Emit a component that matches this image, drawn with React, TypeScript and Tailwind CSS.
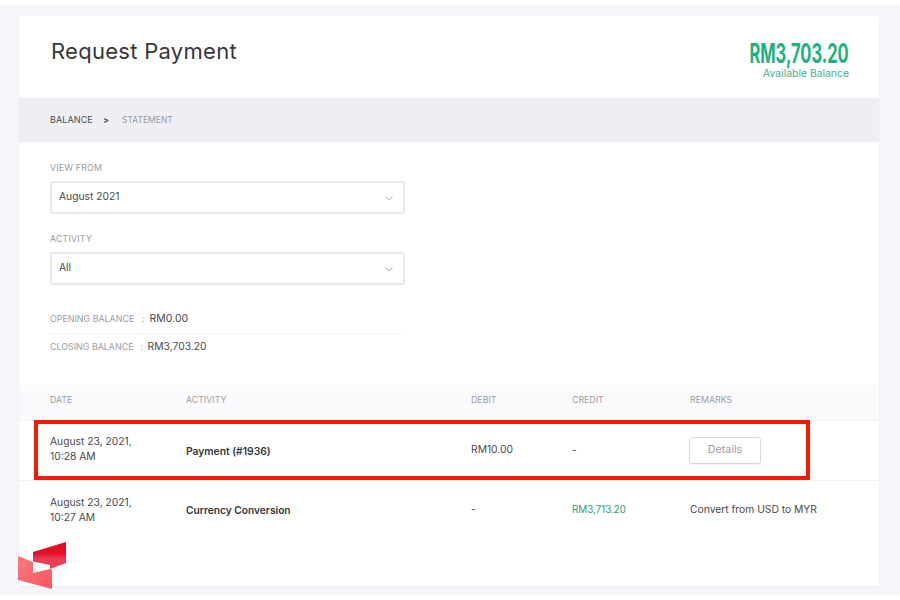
const font = "font-['Inter','Liberation_Sans',sans-serif]";

function Chevron() {
  return (
    <svg width="8" height="5" viewBox="0 0 8 5" fill="none" className="mt-[3px]">
      <path d="M0.5 0.5 L4 4 L7.5 0.5" stroke="#b4b6bb" strokeWidth="1" />
    </svg>
  );
}

function SelectField({ label, value }: { label: string; value: string }) {
  return (
    <div>
      <p className="text-[8.8px] leading-[12px] tracking-[0.2px] text-[#9a9ca3]">{label}</p>
      <div className="mt-[7px] flex h-[33px] w-[355px] items-center justify-between rounded-[3px] border-2 border-[#e9e9ec] bg-white pb-[1px] pl-[7px] pr-[10px] text-[10.3px] text-[#4a4a4f]">
        <span>{value}</span>
        <Chevron />
      </div>
    </div>
  );
}

function Logo() {
  return (
    <svg width="49" height="48" viewBox="0 0 49 48" className="absolute left-[18px] top-[542px]">
      <defs>
        <linearGradient id="upper" x1="0" y1="0" x2="0" y2="1">
          <stop offset="0" stopColor="#e4041c" />
          <stop offset="0.45" stopColor="#e4142c" />
          <stop offset="0.6" stopColor="#e63a52" />
          <stop offset="1" stopColor="#e4445a" />
        </linearGradient>
        <linearGradient id="lower" x1="0" y1="0" x2="1" y2="1">
          <stop offset="0" stopColor="#fb7a80" />
          <stop offset="1" stopColor="#f9565f" />
        </linearGradient>
      </defs>
      <polygon points="15,10 48,0 48,21 32,27 32,23 15,19.5" fill="url(#upper)" />
      <polygon points="0,14 15,20 15,31 32,27 34,28 34,47 0,38" fill="url(#lower)" />
    </svg>
  );
}

const cols = "grid grid-cols-[136px_285px_101px_118px_1fr] items-center px-[31px]";

export default function App() {
  return (
    <div className={`relative h-[600px] w-[900px] overflow-hidden bg-white ${font}`}>
      <div className="mt-[5px] h-[590px] bg-[#f5f6fa] pl-[19px] pr-[21px] pt-[11px]">
        <div className="h-[570px] w-[860px] bg-white shadow-[0_1px_2px_rgba(0,0,0,0.05)]">
          {/* header */}
          <div className="flex h-[82px] items-start justify-between pl-[32px] pr-[30px]">
            <h1 className="mt-[20px] text-[22px] leading-[30px] font-normal tracking-[0.28px] text-[#37373b]">Request Payment</h1>
            <div className="mt-[24px] text-right">
              <p className="origin-right scale-x-[0.61] text-[27px] leading-[27px] font-bold whitespace-nowrap text-[#1db27e]">
                RM3,703.20
              </p>
              <p className="mt-[1px] text-[10.4px] leading-[11px] text-[#3fb28d]">Available Balance</p>
            </div>
          </div>

          {/* breadcrumb */}
          <div className="flex h-[44px] items-center bg-[#eeeff3] pb-[1px] pl-[31px] text-[9px] tracking-[0.1px]">
            <span className="text-[#4a4a50]">BALANCE</span>
            <span className="ml-[10px] font-semibold text-[#4a4a50]">&gt;</span>
            <span className="ml-[13px] mt-[1px] text-[8.4px] text-[#96989f]">STATEMENT</span>
          </div>

          {/* filters */}
          <div className="flex flex-col gap-[19px] pl-[31px] pt-[20px]">
            <SelectField label="VIEW FROM" value="August 2021" />
            <SelectField label="ACTIVITY" value="All" />
          </div>

          {/* balances */}
          <div className="ml-[31px] mt-[19px] w-[352px]">
            <div className="flex h-[30px] items-center border-b border-[#f2f2f4]">
              <span className="w-[85px] text-[8.9px] whitespace-nowrap text-[#9a9ca3]">OPENING BALANCE</span>
              <span className="ml-[7px] text-[9px] text-[#9a9ca3]">:</span>
              <span className="ml-[5px] text-[10.5px] text-[#4a4a50]">RM0.00</span>
            </div>
            <div className="flex h-[27px] items-center pb-[2px]">
              <span className="w-[83px] text-[8.9px] whitespace-nowrap text-[#9a9ca3]">CLOSING BALANCE</span>
              <span className="ml-[7px] text-[9px] text-[#9a9ca3]">:</span>
              <span className="ml-[5px] text-[10.3px] text-[#4a4a50]">RM3,703.20</span>
            </div>
          </div>

          {/* table */}
          <div className="mt-[24px]">
            <div className={`${cols} h-[35px] bg-[#fafafc] pb-[5px] text-[8.8px] text-[#9a9ca3]`}>
              <span>DATE</span>
              <span>ACTIVITY</span>
              <span>DEBIT</span>
              <span>CREDIT</span>
              <span>REMARKS</span>
            </div>
            <div className={`${cols} h-[61px] border-t border-b border-[#f3f3f5] text-[10.3px] text-[#4a4a50]`}>
              <span className="mb-[3px] leading-[15px]">
                August 23, 2021,
                <br />
                10:28 AM
              </span>
              <span className="mt-[2px] text-[10.3px] font-semibold text-[#37373b]">Payment (#1936)</span>
              <span className="mb-[2px]">RM10.00</span>
              <span className="mt-[1px]">-</span>
              <span className="-ml-[1px] flex h-[27px] w-[72px] items-center justify-center rounded-[3px] border border-[#d9dade] text-[10.8px] text-[#9a9ca3] shadow-[0_1px_1px_rgba(0,0,0,0.06)]">
                Details
              </span>
            </div>
            <div className={`${cols} h-[59px] text-[10.3px] text-[#4a4a50]`}>
              <span className="mb-[2px] leading-[15px]">
                August 23, 2021,
                <br />
                10:27 AM
              </span>
              <span className="mt-[1px] text-[10.2px] font-semibold text-[#37373b]">Currency Conversion</span>
              <span className="mb-[1px]">-</span>
              <span className="mb-[1px] text-[9.8px] text-[#2f9c78]">RM3,713.20</span>
              <span className="mb-[1px] whitespace-nowrap">Convert from USD to MYR</span>
            </div>
          </div>
        </div>
      </div>

      {/* annotation box */}
      <div className="absolute left-[34px] top-[420px] h-[60px] w-[776px] border-[4px] border-[#f31a06]" />
      <Logo />
    </div>
  );
}
